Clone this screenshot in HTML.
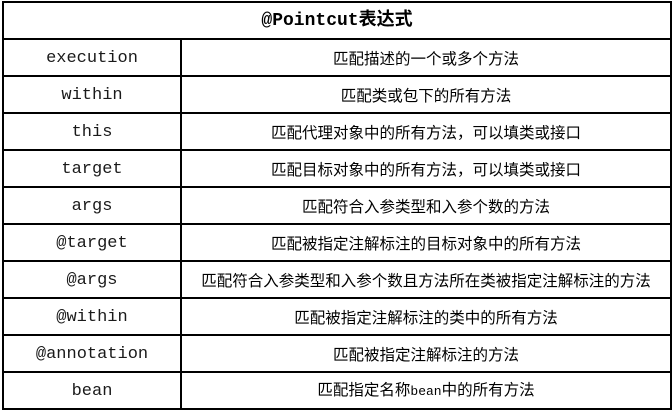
<!DOCTYPE html>
<html><head><meta charset="utf-8"><style>
body{margin:0;background:#fff;width:672px;height:412px;overflow:hidden;position:relative}
table{position:absolute;left:2px;top:1px;border-collapse:collapse;width:668px;table-layout:fixed}
td{border:2px solid #000;height:35px;padding:0;text-align:center;vertical-align:middle;color:#000;font-size:15.5px;font-family:"Noto Sans CJK SC",sans-serif;line-height:20px;white-space:nowrap;overflow:hidden}
td.k{font-family:"Liberation Mono",monospace;font-size:17px;color:#1a1a1a;padding-top:3px;height:32px}
td.h{font-family:"Liberation Mono","Noto Sans CJK SC",monospace;font-weight:bold;font-size:18px}
</style></head><body>
<table>
<colgroup><col style="width:178px"><col style="width:490px"></colgroup>
<tr><td class="h" colspan="2">@Pointcut表达式</td></tr>
<tr><td class="k">execution</td><td>匹配描述的一个或多个方法</td></tr>
<tr><td class="k">within</td><td>匹配类或包下的所有方法</td></tr>
<tr><td class="k">this</td><td>匹配代理对象中的所有方法，可以填类或接口</td></tr>
<tr><td class="k">target</td><td>匹配目标对象中的所有方法，可以填类或接口</td></tr>
<tr><td class="k">args</td><td>匹配符合入参类型和入参个数的方法</td></tr>
<tr><td class="k">@target</td><td>匹配被指定注解标注的目标对象中的所有方法</td></tr>
<tr><td class="k">@args</td><td>匹配符合入参类型和入参个数且方法所在类被指定注解标注的方法</td></tr>
<tr><td class="k">@within</td><td>匹配被指定注解标注的类中的所有方法</td></tr>
<tr><td class="k">@annotation</td><td>匹配被指定注解标注的方法</td></tr>
<tr><td class="k">bean</td><td>匹配指定名称<span style="font-family:'Liberation Mono',monospace;font-size:13px">bean</span>中的所有方法</td></tr>
</table>
</body></html>
